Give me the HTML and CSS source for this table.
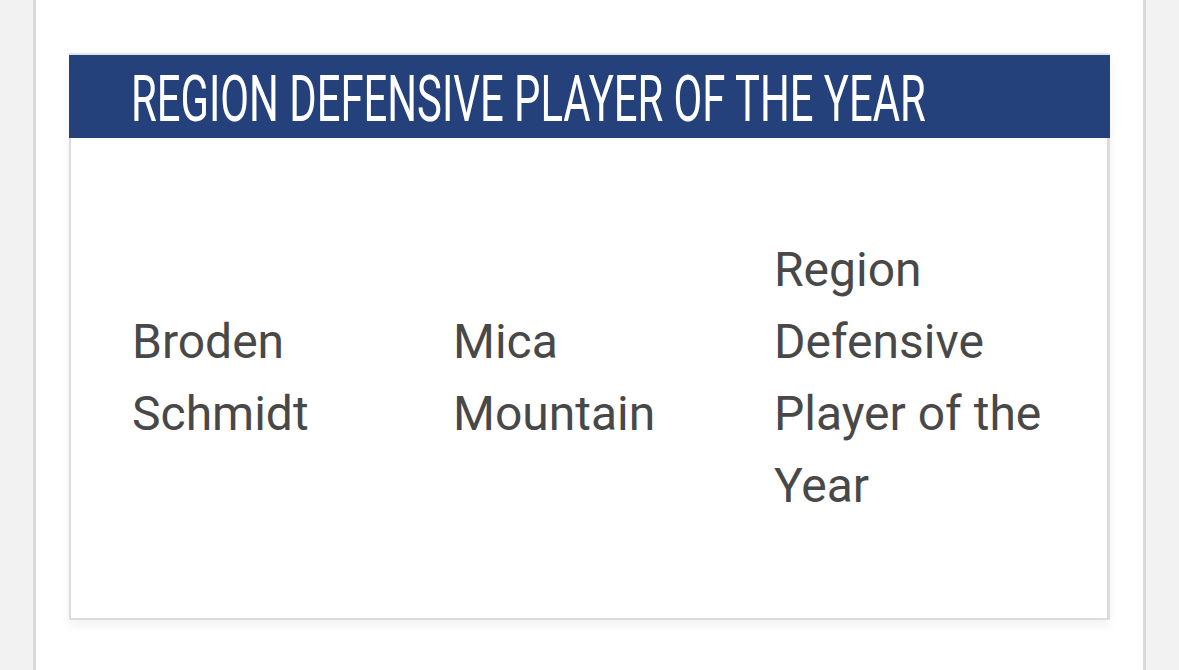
FILE: index.html
```html
<!DOCTYPE html>
<html>
<head>
<meta charset="utf-8">
<link rel="stylesheet" href="styles.css">
</head>
<body>
<div class="panel">
  <section class="card">
    <header class="card-head">
      <h2 class="card-title">REGION DEFENSIVE PLAYER OF THE YEAR</h2>
    </header>
    <div class="card-body">
      <div class="row">
        <div class="cell">Broden<br>Schmidt</div>
        <div class="cell">Mica<br>Mountain</div>
        <div class="cell">Region<br>Defensive<br>Player of the<br>Year</div>
      </div>
    </div>
  </section>
</div>
</body>
</html>
```

FILE: styles.css
```css
html, body {
  margin: 0;
  padding: 0;
  height: 100%;
}
body {
  background: #f2f2f2;
  font-family: Roboto, "Liberation Sans", sans-serif;
  overflow: hidden;
}
.panel {
  margin: 0 33px;
  min-height: 100%;
  box-sizing: border-box;
  background: #ffffff;
  border-left: 3px solid #d9d9d9;
  border-right: 3px solid #d9d9d9;
  padding: 53px 33px 0;
}
.card {
  border-top: 2px solid #e1e4ea;
  box-shadow: 0 6px 10px rgba(0,0,0,0.05);
}
.card-head {
  background: #24417c;
  height: 83px;
  display: flex;
  align-items: center;
  padding-left: 62px;
  overflow: hidden;
}
.card-title {
  margin: 0;
  color: #ffffff;
  font-family: Roboto, "Liberation Sans", sans-serif;
  font-weight: 400;
  font-size: 64px;
  line-height: 1;
  white-space: nowrap;
  transform: scaleX(0.653);
  transform-origin: left center;
  padding-top: 7px;
}
.card-body {
  background: #ffffff;
  border-left: 2px solid #dcdcdc;
  border-right: 3px solid #dcdcdc;
  border-bottom: 2px solid #dcdcdc;
  padding: 96px 0;
}
.row {
  display: grid;
  grid-template-columns: 321px 321px 321px;
  align-items: center;
  padding-left: 61px;
}
.cell {
  color: #484848;
  font-size: 48px;
  line-height: 72px;
}
```
